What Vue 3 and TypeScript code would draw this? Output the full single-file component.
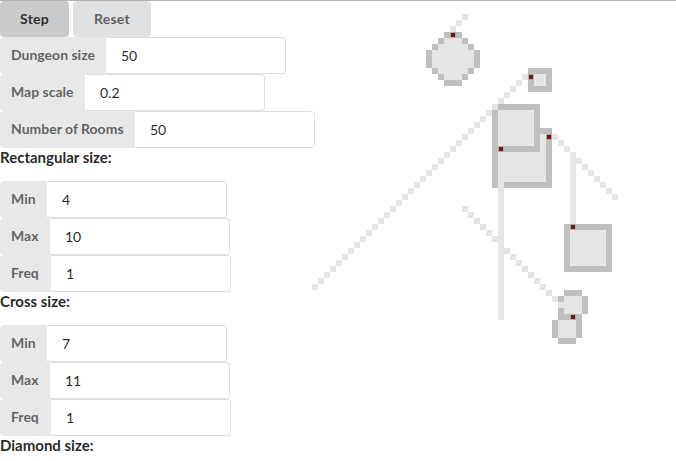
<script setup lang="ts">
import { reactive } from 'vue'

interface Field { label: string; value: string; tagWidth: number }
interface Group { title: string; fields: Field[] }
type Kind = 'floor' | 'wall' | 'door'
type Block = [kind: Kind, col: number, row: number, cols: number, rows: number]

const general = reactive<Field[]>([
  { label: 'Dungeon size', value: '50', tagWidth: 106 },
  { label: 'Map scale', value: '0.2', tagWidth: 85 },
  { label: 'Number of Rooms', value: '50', tagWidth: 135 },
])

function range(min: string, max: string, freq: string): Field[] {
  return [
    { label: 'Min', value: min, tagWidth: 47 },
    { label: 'Max', value: max, tagWidth: 50 },
    { label: 'Freq', value: freq, tagWidth: 51 },
  ]
}

const groups = reactive<Group[]>([
  { title: 'Rectangular size:', fields: range('4', '10', '1') },
  { title: 'Cross size:', fields: range('7', '11', '1') },
  { title: 'Diamond size:', fields: [] },
])

// Diagonal corridor, one tile per step; dx is +1 or -1 while rows go down.
function diagonal(col: number, row: number, dx: number, length: number): Block[] {
  return Array.from({ length }, (_, i): Block => ['floor', col + dx * i, row + i, 1, 1])
}

const blocks: Block[] = [
  // round room
  ['wall', 74, 5, 3, 9],
  ['wall', 73, 6, 5, 7],
  ['wall', 72, 7, 7, 5],
  ['wall', 71, 8, 9, 3],
  ['floor', 74, 6, 3, 7],
  ['floor', 73, 7, 5, 5],
  ['floor', 72, 8, 7, 3],
  ...diagonal(77, 2, -1, 3),
  // small room
  ['wall', 88, 11, 4, 4],
  ['floor', 89, 12, 2, 2],
  // overlapping pair
  ['wall', 82, 21, 10, 10],
  ['floor', 83, 22, 8, 8],
  ['wall', 82, 17, 8, 8],
  ['floor', 83, 18, 6, 6],
  ['floor', 83, 25, 1, 28],
  ...diagonal(87, 12, -1, 36),
  // east corridors and room
  ...diagonal(92, 22, 1, 11),
  ['floor', 95, 26, 1, 11],
  ['wall', 94, 37, 8, 8],
  ['floor', 95, 38, 6, 6],
  // south corridor and crosses
  ...diagonal(77, 34, 1, 16),
  ['wall', 94, 48, 3, 1],
  ['wall', 93, 49, 5, 3],
  ['floor', 94, 49, 3, 3],
  ['floor', 93, 50, 1, 1],
  ['wall', 93, 52, 4, 1],
  ['wall', 92, 53, 5, 3],
  ['floor', 93, 53, 3, 3],
  ['wall', 93, 56, 3, 1],
  // doors
  ['door', 75, 5, 1, 1],
  ['door', 88, 12, 1, 1],
  ['door', 83, 24, 1, 1],
  ['door', 91, 22, 1, 1],
  ['door', 95, 37, 1, 1],
  ['door', 95, 52, 1, 1],
]

const tile = 6
const originCol = 52
const shapes = blocks.map(([kind, col, row, cols, rows]) => ({
  kind,
  x: (col - originCol) * tile,
  y: row * tile + 1,
  w: cols * tile,
  h: rows * tile,
}))
const doors = shapes.filter((s) => s.kind === 'door')
</script>

<template>
  <main class="page">
    <section class="controls">
      <div class="buttons">
        <button class="button active">Step</button>
        <button class="button">Reset</button>
      </div>
      <label v-for="f in general" :key="f.label" class="field">
        <span class="tag" :style="{ width: f.tagWidth + 'px' }">{{ f.label }}</span>
        <input v-model="f.value" class="entry" type="text" />
      </label>
      <template v-for="g in groups" :key="g.title">
        <h4 class="title">{{ g.title }}</h4>
        <label v-for="f in g.fields" :key="f.label" class="field">
          <span class="tag" :style="{ width: f.tagWidth + 'px' }">{{ f.label }}</span>
          <input v-model="f.value" class="entry" type="text" />
        </label>
      </template>
    </section>
    <svg class="map" width="364" height="450" viewBox="0 0 364 450" shape-rendering="crispEdges">
      <defs>
        <pattern id="grain" width="2" height="2" patternUnits="userSpaceOnUse">
          <rect width="2" height="2" fill="#e7e7e7" />
          <rect width="1" height="1" fill="#e4e4e4" />
          <rect x="1" y="1" width="1" height="1" fill="#e4e4e4" />
        </pattern>
      </defs>
      <rect v-for="(s, i) in shapes" :key="i" :class="s.kind" :x="s.x" :y="s.y" :width="s.w" :height="s.h" />
      <g v-for="(d, i) in doors" :key="'d' + i">
        <rect class="frame" :x="d.x + 1" :y="d.y + 1" width="4" height="4" />
        <rect class="core" :x="d.x + 2" :y="d.y + 2" width="2" height="2" />
      </g>
    </svg>
  </main>
</template>

<style>
body {
  background: #fff;
  overflow: hidden;
}
</style>

<style scoped>
.page {
  box-sizing: border-box;
  display: flex;
  height: 461px;
  overflow: hidden;
  border-top: 1px solid #b7b3b5;
  font-family: Lato, 'Liberation Sans', sans-serif;
  font-size: 14px;
  color: rgba(0, 0, 0, 0.87);
}
.controls {
  flex: 0 0 312px;
  width: 312px;
  white-space: nowrap;
}
.buttons {
  display: flex;
  gap: 4px;
}
.button {
  width: 78px;
  height: 36px;
  padding: 0;
  border: 0;
  border-radius: 4px;
  background: #e0e1e2;
  color: rgba(0, 0, 0, 0.6);
  font: 700 14px/36px Lato, 'Liberation Sans', sans-serif;
  letter-spacing: 0.2px;
}
.button.active {
  width: 69px;
  background: #cacbcd;
  color: rgba(0, 0, 0, 0.8);
}
.field {
  display: flex;
  height: 37px;
}
.tag {
  box-sizing: border-box;
  flex: none;
  padding-left: 11px;
  border-radius: 4px 0 0 4px;
  background: #e8e8e8;
  color: rgba(0, 0, 0, 0.6);
  font-weight: 700;
  line-height: 36px;
}
.entry {
  box-sizing: border-box;
  flex: none;
  width: 180px;
  height: 37px;
  padding: 0 14px 1px;
  border: 1px solid rgba(34, 36, 38, 0.15);
  border-left-color: transparent;
  border-radius: 0 4px 4px 0;
  outline: 0;
  background: #fff;
  color: rgba(0, 0, 0, 0.87);
  font: 400 14px Lato, 'Liberation Sans', sans-serif;
}
.title {
  margin: 0 0 15px;
  font-size: 15px;
  font-weight: 700;
  line-height: 18px;
}
.map {
  display: block;
  flex: none;
}
.floor {
  fill: url(#grain);
}
.wall {
  fill: #bfbfbf;
}
.door {
  fill: #b5a9a9;
}
.frame {
  fill: #5c1a18;
}
.core {
  fill: #8c1410;
}
</style>
